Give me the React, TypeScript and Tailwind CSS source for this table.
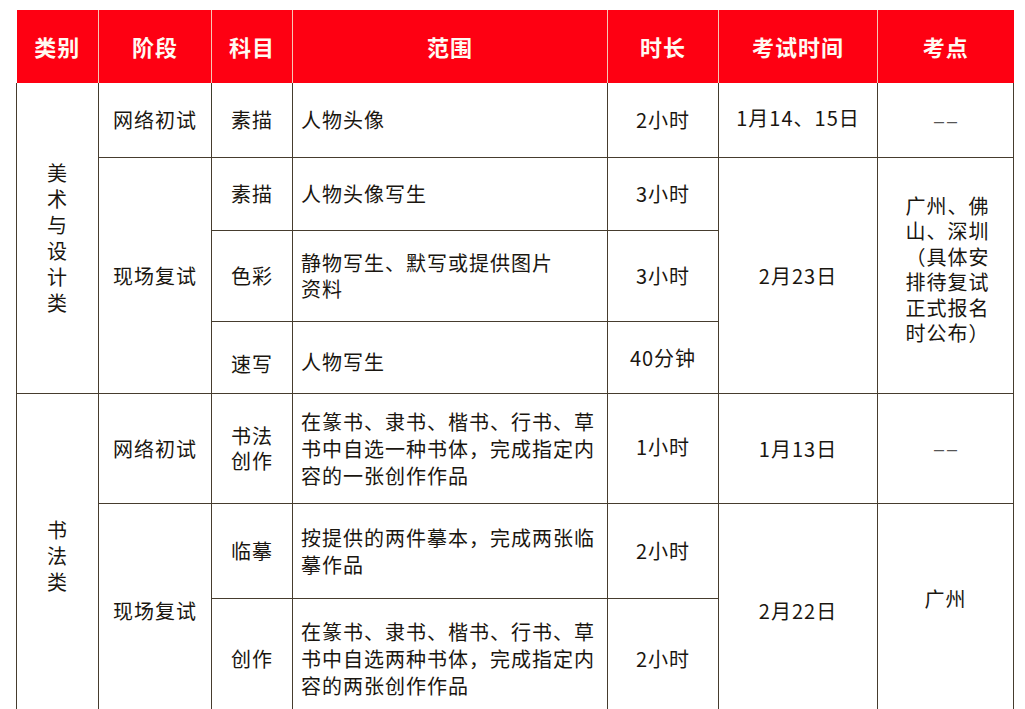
import React from "react";

const FONT = { fontFamily: '"Noto Sans CJK SC", "Noto Sans", sans-serif' };

const Lines = ({ lines, className = "" }: { lines: string[]; className?: string }) => (
  <div className={className}>
    {lines.map((l, i) => (
      <div key={i} className="whitespace-nowrap">
        {l}
      </div>
    ))}
  </div>
);

const Vertical = ({ text }: { text: string }) => (
  <div className="flex flex-col items-center leading-[26px]">
    {text.split("").map((c, i) => (
      <span key={i}>{c}</span>
    ))}
  </div>
);

const td = "border-[1.5px] border-[#463c2e] text-center align-middle";
const tdL = "border-[1.5px] border-[#463c2e] text-left align-middle pl-2";
const Dash = () => (
  <span
    className="text-[#555] text-[18px] tracking-[3px] pl-[3px]"
    style={{ fontFamily: '"Liberation Sans", Arial, sans-serif' }}
  >
    ––
  </span>
);

export default function App() {
  return (
    <div className="w-[1025px] h-[709px] overflow-hidden bg-white pt-[10px] pl-4" style={FONT}>
      <table className="table-fixed border-collapse text-[20px] tracking-[1px] text-[#1a1610] leading-[27px]">
        <colgroup>
          <col className="w-[82px]" />
          <col className="w-[113px]" />
          <col className="w-[81px]" />
          <col className="w-[315px]" />
          <col className="w-[111px]" />
          <col className="w-[159px]" />
          <col className="w-[136px]" />
        </colgroup>
        <thead>
          <tr className="h-[73px] bg-[#fe0012] text-[#fffaf2] text-[22px] font-bold">
            <th className="border-r border-[#f6c6b4] font-bold">类别</th>
            <th className="border-x border-[#f6c6b4] font-bold">阶段</th>
            <th className="border-x border-[#f6c6b4] font-bold">科目</th>
            <th className="border-x border-[#f6c6b4] font-bold">范围</th>
            <th className="border-x border-[#f6c6b4] font-bold">时长</th>
            <th className="border-x border-[#f6c6b4] font-bold">考试时间</th>
            <th className="border-l border-[#f6c6b4] font-bold">考点</th>
          </tr>
        </thead>
        <tbody>
          <tr className="h-[74px]">
            <td rowSpan={4} className={td + " border-t-0"}>
              <Vertical text="美术与设计类" />
            </td>
            <td className={td + " border-t-0"}>网络初试</td>
            <td className={td + " border-t-0"}>素描</td>
            <td className={tdL + " border-t-0"}>人物头像</td>
            <td className={td + " border-t-0"}>2小时</td>
            <td className={td + " border-t-0 pb-1"}>1月14、15日</td>
            <td className={td + " border-t-0"}>
              <Dash />
            </td>
          </tr>
          <tr className="h-[73px]">
            <td rowSpan={3} className={td}>现场复试</td>
            <td className={td}>素描</td>
            <td className={tdL}>人物头像写生</td>
            <td className={td}>3小时</td>
            <td rowSpan={3} className={td}>2月23日</td>
            <td rowSpan={3} className={td}>
              <Lines
                className="inline-block text-left leading-[25.5px] pb-3 pl-1"
                lines={["广州、佛", "山、深圳", "（具体安", "排待复试", "正式报名", "时公布）"]}
              />
            </td>
          </tr>
          <tr className="h-[91px]">
            <td className={td}>色彩</td>
            <td className={tdL}>
              <Lines className="leading-[26px]" lines={["静物写生、默写或提供图片", "资料"]} />
            </td>
            <td className={td}>3小时</td>
          </tr>
          <tr className="h-[72px]">
            <td className={td + " pt-3"}>速写</td>
            <td className={tdL + " pt-2"}>人物写生</td>
            <td className={td}>40分钟</td>
          </tr>
          <tr className="h-[110px]">
            <td rowSpan={3} className={td}>
              <Vertical text="书法类" />
            </td>
            <td className={td}>网络初试</td>
            <td className={td}>
              <Lines className="leading-[25px]" lines={["书法", "创作"]} />
            </td>
            <td className={tdL}>
              <Lines
                className="leading-[27px]"
                lines={["在篆书、隶书、楷书、行书、草", "书中自选一种书体，完成指定内", "容的一张创作作品"]}
              />
            </td>
            <td className={td + " pb-1"}>1小时</td>
            <td className={td}>1月13日</td>
            <td className={td}>
              <Dash />
            </td>
          </tr>
          <tr className="h-[95px]">
            <td rowSpan={2} className={td}>现场复试</td>
            <td className={td}>临摹</td>
            <td className={tdL}>
              <Lines className="leading-[27px]" lines={["按提供的两件摹本，完成两张临", "摹作品"]} />
            </td>
            <td className={td}>2小时</td>
            <td rowSpan={2} className={td}>2月22日</td>
            <td rowSpan={2} className={td + " pb-6"}>广州</td>
          </tr>
          <tr className="h-[120px]">
            <td className={td}>创作</td>
            <td className={tdL}>
              <Lines
                className="leading-[27px]"
                lines={["在篆书、隶书、楷书、行书、草", "书中自选两种书体，完成指定内", "容的两张创作作品"]}
              />
            </td>
            <td className={td}>2小时</td>
          </tr>
        </tbody>
      </table>
    </div>
  );
}
